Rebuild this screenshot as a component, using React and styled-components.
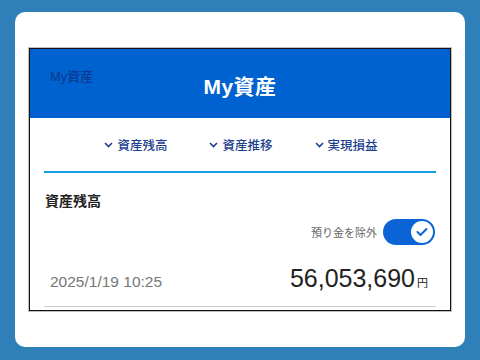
import React from 'react';
import styled, { createGlobalStyle } from 'styled-components';

const GlobalStyle = createGlobalStyle`
    html, body {
        margin: 0;
        padding: 0;
        background: #2f80b9;
        font-family: "Liberation Sans", "Noto Sans CJK JP", sans-serif;
    }
`;

const Page = styled.div`
    width: 480px;
    height: 360px;
    padding: 12px 15px 13px;
    box-sizing: border-box;
`;

const Card = styled.div`
    height: 100%;
    background: #fff;
    border-radius: 10px;
    padding: 36px 14px;
    box-sizing: border-box;
`;

const Frame = styled.div`
    height: 263px;
    border: 1px solid #111;
    box-shadow: 0 0 0 1px rgba(0, 0, 0, 0.25);
    overflow: hidden;
    box-sizing: border-box;
`;

const Header = styled.div`
    height: 69px;
    background: #0062d1;
    display: grid;
    grid-template-columns: 1fr auto 1fr;
    align-items: center;
    padding: 0 20px;
`;

const SmallTitle = styled.div`
    align-self: start;
    margin-top: 17px;
    font-size: 13px;
    color: #0b3a8f;
    font-weight: 500;
`;

const Title = styled.h1`
    margin: 3px 0 0;
    font-size: 21px;
    font-weight: bold;
    color: #fff;
    letter-spacing: 0.5px;
`;

const Content = styled.div`
    padding: 0 14px;
`;

const Tabs = styled.div`
    height: 53px;
    display: flex;
    justify-content: center;
    align-items: center;
    gap: 42px;
    border-bottom: 2px solid #14a0e8;
    padding-left: 2px;
`;

const Tab = styled.div`
    display: flex;
    align-items: center;
    gap: 4px;
    font-size: 12.5px;
    color: #1d3f8f;
    font-weight: 500;
`;

const SectionTitle = styled.h2`
    margin: 18px 0 0 1px;
    font-size: 14px;
    line-height: 20px;
    font-weight: bold;
    color: #222;
`;

const ToggleRow = styled.div`
    display: flex;
    justify-content: flex-end;
    align-items: center;
    gap: 6px;
    margin-top: 8px;
    padding-right: 1px;
`;

const ToggleLabel = styled.span`
    font-size: 11px;
    color: #666;
`;

const Switch = styled.div`
    width: 52px;
    height: 26px;
    border-radius: 13px;
    background: ${(p) => (p.on ? '#0a64d6' : '#ccc')};
    display: flex;
    align-items: center;
    justify-content: ${(p) => (p.on ? 'flex-end' : 'flex-start')};
    padding: 0 2px;
    box-sizing: border-box;
`;

const Knob = styled.div`
    width: 22px;
    height: 22px;
    border-radius: 50%;
    background: #fff;
    display: flex;
    align-items: center;
    justify-content: center;
`;

const BalanceRow = styled.div`
    height: 62px;
    display: flex;
    justify-content: space-between;
    align-items: baseline;
    padding: 19px 8px 0 6px;
    box-sizing: border-box;
    border-bottom: 1px solid #c5cdd8;
`;

const DateText = styled.span`
    font-size: 15.5px;
    color: #777;
`;

const Amount = styled.span`
    font-size: 25px;
    color: #222;
`;

const Yen = styled.span`
    font-size: 11px;
    margin-left: 2px;
    color: #222;
`;

const Chevron = () => (
    <svg width="9" height="6" viewBox="0 0 9 6">
        <path d="M1 1l3.5 3.5L8 1" fill="none" stroke="#1d3f8f" strokeWidth="1.6" />
    </svg>
);

const Check = () => (
    <svg width="12" height="10" viewBox="0 0 12 10">
        <path d="M1.5 5l3 3 6-6" fill="none" stroke="#0a64d6" strokeWidth="2" strokeLinecap="round" strokeLinejoin="round" />
    </svg>
);

const tabs = ['資産残高', '資産推移', '実現損益'];

const App = () => {
    return (
        <Page>
            <GlobalStyle />
            <Card>
                <Frame>
                    <Header>
                        <SmallTitle>My資産</SmallTitle>
                        <Title>My資産</Title>
                        <div />
                    </Header>
                    <Content>
                        <Tabs>
                            {tabs.map((t) => (
                                <Tab key={t}>
                                    <Chevron />
                                    {t}
                                </Tab>
                            ))}
                        </Tabs>
                        <SectionTitle>資産残高</SectionTitle>
                        <ToggleRow>
                            <ToggleLabel>預り金を除外</ToggleLabel>
                            <Switch on>
                                <Knob>
                                    <Check />
                                </Knob>
                            </Switch>
                        </ToggleRow>
                        <BalanceRow>
                            <DateText>2025/1/19 10:25</DateText>
                            <Amount>
                                56,053,690<Yen>円</Yen>
                            </Amount>
                        </BalanceRow>
                    </Content>
                </Frame>
            </Card>
        </Page>
    );
};

export default App;
